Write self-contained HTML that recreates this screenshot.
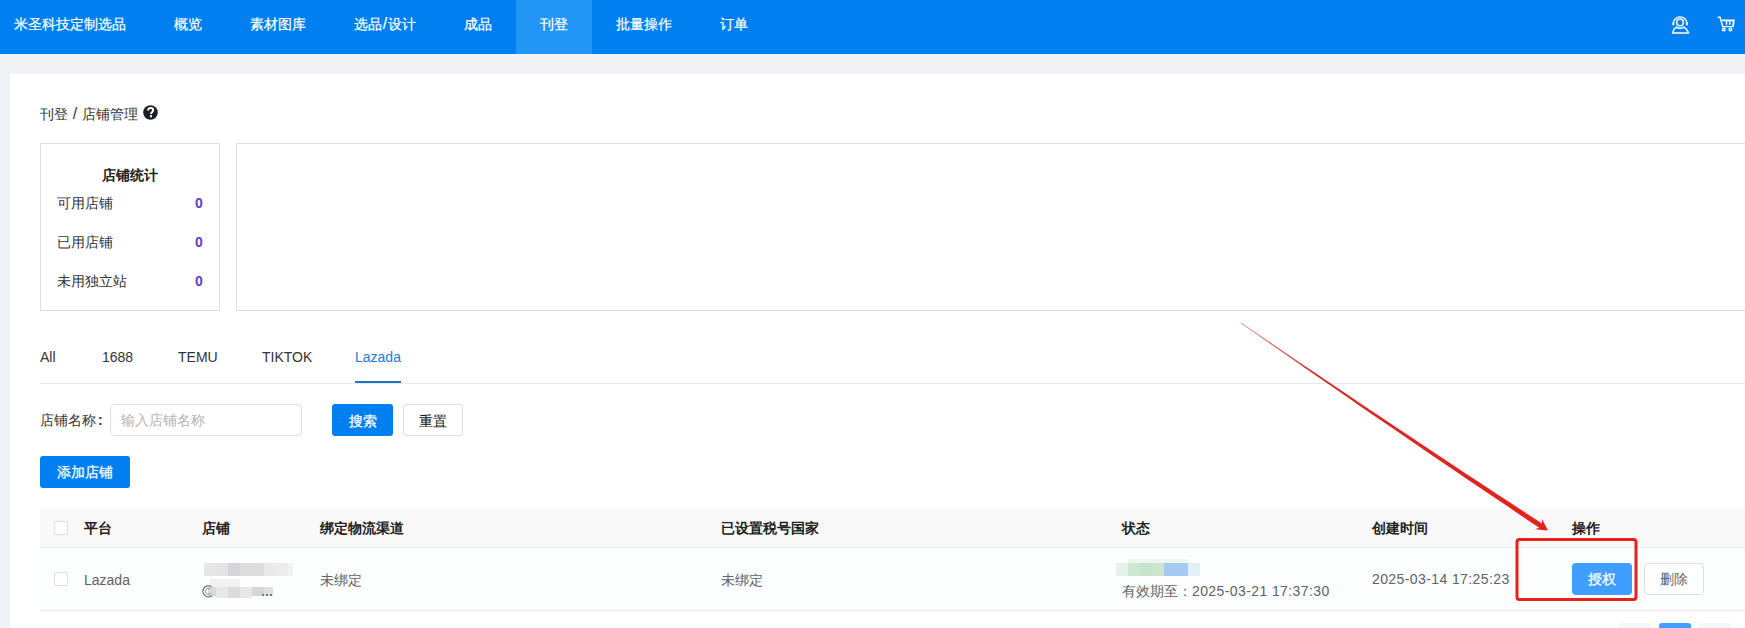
<!DOCTYPE html>
<html><head><meta charset="utf-8">
<style>
*{box-sizing:border-box;margin:0;padding:0}
html,body{width:1745px;height:628px;overflow:hidden;background:#f0f2f5;font-family:"Liberation Sans",sans-serif;font-size:14px;color:#333}
.a{position:absolute;white-space:nowrap;line-height:20px}
#nav{position:absolute;left:0;top:0;width:1745px;height:54px;background:#0080f0}
#nav .it{position:absolute;top:14px;color:#fff;-webkit-text-stroke:0.2px #fff;line-height:20px;white-space:nowrap}
#act{position:absolute;left:516px;top:0;width:76px;height:54px;background:#2395f5}
#card{position:absolute;left:10px;top:74px;width:1735px;height:554px;background:#fff}
.box{position:absolute;border:1px solid #ddd;background:#fff}
.btn{position:absolute;border-radius:3px;text-align:center;line-height:30px;font-size:14px;white-space:nowrap}
.hd{font-weight:bold;color:#222}
.cb{position:absolute;width:14px;height:14px;border:1px solid #dcdfe6;border-radius:2px;background:#fff}
.g{color:#606266}
.blk{position:absolute;height:13px}
.w{-webkit-text-stroke:0.25px #fff}
.pg{position:absolute;top:623px;width:32px;height:28px;border-radius:3px;background:#f4f5f8}
</style></head><body>
<div id="nav">
  <div id="act"></div>
  <div class="it" style="left:14px">米圣科技定制选品</div>
  <div class="it" style="left:174px">概览</div>
  <div class="it" style="left:250px">素材图库</div>
  <div class="it" style="left:354px">选品<span style="display:inline-block;width:6px;text-align:center;font-size:16px;line-height:14px">/</span>设计</div>
  <div class="it" style="left:464px">成品</div>
  <div class="it" style="left:540px">刊登</div>
  <div class="it" style="left:616px">批量操作</div>
  <div class="it" style="left:720px">订单</div>
  <svg style="position:absolute;left:1670px;top:14px" width="22" height="22" viewBox="0 0 22 22">
    <circle cx="10" cy="8.4" r="3.3" fill="none" stroke="#fff" stroke-width="1.5"/>
    <path d="M3.4 9.6 A6.7 6.7 0 0 1 16.8 9.6" fill="none" stroke="#fff" stroke-width="1.4"/>
    <rect x="2.3" y="8.2" width="2" height="3.2" rx="0.8" fill="#fff"/>
    <rect x="15.9" y="8.2" width="2" height="3.2" rx="0.8" fill="#fff"/>
    <path d="M2.6 18.9 C3.2 16.2 4.5 14.2 6.3 13.1 Q10 15.3 13.9 13.1 C15.8 14.2 17.4 16.2 18.6 18.9 Z" fill="none" stroke="#fff" stroke-width="1.5" stroke-linejoin="round"/>
  </svg>
  <svg style="position:absolute;left:1716px;top:15px" width="20" height="18" viewBox="0 0 20 18">
    <path d="M1.8 2.3 H4 L6.8 11.6 H17" fill="none" stroke="#fff" stroke-width="1.4"/>
    <path d="M6 5.4 H17.8 L17 11.6" fill="none" stroke="#fff" stroke-width="1.8"/>
    <path d="M10.5 5.5 V9.8 M13.7 5.5 V9.8" stroke="#fff" stroke-width="1.5"/>
    <circle cx="7.8" cy="14.5" r="1.3" fill="none" stroke="#fff" stroke-width="1.4"/>
    <circle cx="14.4" cy="14.5" r="1.3" fill="none" stroke="#fff" stroke-width="1.4"/>
  </svg>
</div>
<div id="card"></div>

<div class="a" style="left:40px;top:104px;color:#333">刊登<span style="display:inline-block;width:14px;text-align:center;font-size:16px;line-height:14px">/</span>店铺管理</div>
<svg style="position:absolute;left:143px;top:105px" width="15" height="15" viewBox="0 0 15 15">
  <circle cx="7.5" cy="7.5" r="7.3" fill="#1b1f26"/>
  <path d="M5 5.6 C5 3.9 6.1 3 7.6 3 C9.2 3 10.2 4 10.2 5.3 C10.2 6.5 9.3 7 8.6 7.5 C8.1 7.9 8 8.2 8 8.9" fill="none" stroke="#fff" stroke-width="1.9"/>
  <rect x="6.9" y="10.2" width="2.1" height="2.1" fill="#fff"/>
</svg>

<div class="box" style="left:40px;top:143px;width:180px;height:168px"></div>
<div class="box" style="left:236px;top:143px;width:1520px;height:168px"></div>
<div class="a hd" style="left:102px;top:165px">店铺统计</div>
<div class="a" style="left:57px;top:193px">可用店铺</div>
<div class="a" style="left:57px;top:232px">已用店铺</div>
<div class="a" style="left:57px;top:271px">未用独立站</div>
<div class="a" style="left:195px;top:193px;color:#5f3dc8;font-weight:bold">0</div>
<div class="a" style="left:195px;top:232px;color:#5f3dc8;font-weight:bold">0</div>
<div class="a" style="left:195px;top:271px;color:#5f3dc8;font-weight:bold">0</div>

<!-- tabs -->
<div style="position:absolute;left:40px;top:383px;width:1705px;height:1px;background:#e8e8e8"></div>
<div class="a" style="left:40px;top:347px;color:#333">All</div>
<div class="a" style="left:102px;top:347px;color:#333">1688</div>
<div class="a" style="left:178px;top:347px;color:#333">TEMU</div>
<div class="a" style="left:262px;top:347px;color:#333">TIKTOK</div>
<div class="a" style="left:355px;top:347px;color:#1e7bd6">Lazada</div>
<div style="position:absolute;left:355px;top:381px;width:46px;height:2px;background:#1e74cc"></div>

<!-- search -->
<div class="a" style="left:40px;top:410px;color:#333">店铺名称<span style="margin-left:2px;font-weight:bold">:</span></div>
<div style="position:absolute;left:110px;top:404px;width:192px;height:32px;border:1px solid #dcdde0;border-radius:4px;background:#fff"></div>
<div class="a" style="left:121px;top:410px;color:#b4b4b4">输入店铺名称</div>
<div class="btn w" style="left:332px;top:404px;width:61px;height:32px;background:#0080f0;color:#fff;line-height:34px">搜索</div>
<div class="btn" style="left:403px;top:404px;width:60px;height:32px;border:1px solid #dcdcdc;background:#fff;color:#111;line-height:32px">重置</div>
<div class="btn w" style="left:40px;top:456px;width:90px;height:32px;background:#0080f0;color:#fff;line-height:32px">添加店铺</div>

<!-- table -->
<div style="position:absolute;left:40px;top:508px;width:1705px;height:40px;background:#f9f9fa;border-bottom:1px solid #e8eaee"></div>
<div style="position:absolute;left:40px;top:548px;width:1705px;height:63px;background:#fcfefe;border-bottom:1px solid #e8eaee"></div>
<div class="cb" style="left:54px;top:521px"></div>
<div class="a hd" style="left:84px;top:518px">平台</div>
<div class="a hd" style="left:202px;top:518px">店铺</div>
<div class="a hd" style="left:320px;top:518px">绑定物流渠道</div>
<div class="a hd" style="left:721px;top:518px">已设置税号国家</div>
<div class="a hd" style="left:1122px;top:518px">状态</div>
<div class="a hd" style="left:1372px;top:518px">创建时间</div>
<div class="a hd" style="left:1572px;top:518px">操作</div>

<div class="cb" style="left:54px;top:572px"></div>
<div class="a g" style="left:84px;top:570px">Lazada</div>
<div class="a g" style="left:320px;top:570px">未绑定</div>
<div class="a g" style="left:721px;top:570px">未绑定</div>
<div class="a g" style="left:1122px;top:581px">有效期至：<span style="letter-spacing:0.4px">2025-03-21 17:37:30</span></div>
<div class="a g" style="left:1372px;top:569px;letter-spacing:0.4px">2025-03-14 17:25:23</div>

<!-- blurred store -->
<div class="blk" style="left:288px;top:563px;width:5px;background:#f2f2f3"></div>
<div class="blk" style="left:204px;top:563px;width:12px;background:#e6e6e6"></div>
<div class="blk" style="left:216px;top:563px;width:12px;background:#e3e3e4"></div>
<div class="blk" style="left:228px;top:563px;width:12px;background:#d5d5d7"></div>
<div class="blk" style="left:240px;top:563px;width:12px;background:#dddddf"></div>
<div class="blk" style="left:252px;top:563px;width:12px;background:#dcdcdd"></div>
<div class="blk" style="left:264px;top:563px;width:12px;background:#e9e9ea"></div>
<div class="blk" style="left:276px;top:563px;width:12px;background:#ececed"></div>
<div class="blk" style="left:210px;top:579px;width:30px;height:8px;background:#f1f1f2"></div>
<div class="blk" style="left:208px;top:587px;width:8px;height:9px;background:#d9d9db"></div>
<div class="blk" style="left:216px;top:587px;width:12px;height:11px;background:#e7e7e8"></div>
<div class="blk" style="left:228px;top:587px;width:12px;height:11px;background:#dcdcde"></div>
<div class="blk" style="left:240px;top:587px;width:12px;height:11px;background:#e6e6e7"></div>
<div class="blk" style="left:252px;top:587px;width:12px;height:9px;background:#d6d6d7"></div>
<div class="blk" style="left:264px;top:587px;width:9px;height:9px;background:#e0e0e1"></div>
<svg style="position:absolute;left:200px;top:583px" width="16" height="16" viewBox="0 0 16 16"><path d="M11.5 3.6 A5.6 5.6 0 1 0 12.2 12.6" fill="none" stroke="#606266" stroke-width="1.2"/><path d="M10.2 6 A3 3 0 1 0 10.6 10.4" fill="none" stroke="#8a8c90" stroke-width="1"/></svg>
<div class="blk" style="left:262px;top:594px;width:2px;height:2px;background:#777"></div>
<div class="blk" style="left:266px;top:594px;width:2px;height:2px;background:#777"></div>
<div class="blk" style="left:270px;top:594px;width:2px;height:2px;background:#777"></div>

<!-- blurred tag -->
<div class="blk" style="left:1116px;top:563px;width:12px;background:#e6f2e8"></div>
<div class="blk" style="left:1128px;top:563px;width:12px;background:#cde7d2"></div>
<div class="blk" style="left:1140px;top:563px;width:12px;background:#c6e4cc"></div>
<div class="blk" style="left:1152px;top:563px;width:12px;background:#cbe6d0"></div>
<div class="blk" style="left:1164px;top:563px;width:12px;background:#a4c9f3"></div>
<div class="blk" style="left:1176px;top:563px;width:12px;background:#a4c9f3"></div>
<div class="blk" style="left:1188px;top:563px;width:12px;background:#e3eef9"></div>
<div class="blk" style="left:1128px;top:559px;width:60px;height:4px;background:#eef6ef"></div>

<div class="btn w" style="left:1572px;top:563px;width:60px;height:32px;background:#409eff;color:#fff;border-radius:4px;line-height:32px">授权</div>
<div class="btn" style="left:1644px;top:563px;width:60px;height:32px;border:1px solid #dedede;background:#fff;color:#606266;border-radius:4px">删除</div>

<!-- pagination -->
<div class="pg" style="left:1619px"></div>
<div class="pg" style="left:1659px;background:#409eff"></div>
<div class="pg" style="left:1699px"></div>

<!-- annotation -->
<svg style="position:absolute;left:0;top:0" width="1745" height="628">
  <rect x="1517" y="539.5" width="119" height="60" rx="2.5" fill="none" stroke="#e8201a" stroke-width="3"/>
  <defs><linearGradient id="ag" gradientUnits="userSpaceOnUse" x1="1241.5" y1="322.7" x2="1548" y2="530.6"><stop offset="0" stop-color="#c83a36" stop-opacity="0.6"/><stop offset="0.25" stop-color="#d62a24" stop-opacity="1"/><stop offset="1" stop-color="#e8201a"/></linearGradient></defs>
  <polygon points="1241.00,323.39 1255.91,333.81 1270.82,344.21 1285.72,354.59 1300.63,364.94 1315.54,375.27 1330.45,385.59 1345.35,395.87 1360.26,406.14 1375.17,416.39 1390.07,426.61 1404.98,436.81 1419.89,446.99 1434.80,457.15 1449.70,467.28 1464.61,477.39 1479.52,487.48 1494.42,497.55 1509.33,507.60 1524.24,517.63 1539.14,527.63 1535.00,529.29 1548.00,530.60 1541.95,519.02 1541.95,523.49 1526.92,513.66 1511.89,503.82 1496.86,493.95 1481.84,484.06 1466.81,474.14 1451.78,464.21 1436.75,454.25 1421.73,444.27 1406.70,434.27 1391.67,424.25 1376.64,414.20 1361.62,404.14 1346.59,394.05 1331.56,383.94 1316.53,373.80 1301.51,363.65 1286.48,353.47 1271.45,343.27 1256.42,333.05 1241.40,322.81" fill="url(#ag)"/>
</svg>
</body></html>
